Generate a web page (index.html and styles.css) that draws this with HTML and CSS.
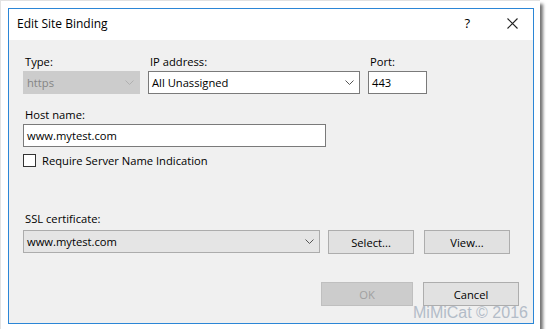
FILE: index.html
```html
<!DOCTYPE html>
<html lang="en">
<head>
    <meta charset="UTF-8">
    <meta name="viewport" content="width=device-width, initial-scale=1.0">
    <title>Edit Site Binding</title>
    <link rel="stylesheet" href="styles.css">
</head>
<body>
    <div class="paper">
        <div class="window">
            <div class="titlebar">
                <span class="title">Edit Site Binding</span>
                <span class="help">?</span>
                <span class="close">
                    <svg width="11" height="11" viewBox="0 0 11 11"><path d="M0.5 0.5 L10.5 10.5 M10.5 0.5 L0.5 10.5" stroke="#222" stroke-width="1.1" fill="none"/></svg>
                </span>
            </div>

            <div class="content">
                <!-- Type / IP / Port -->
                <div class="row top-row">
                    <div class="field type-field">
                        <div class="label">Type:</div>
                        <div class="combo disabled">
                            <span>https</span>
                            <svg class="chevron" width="9" height="5" viewBox="0 0 9 5"><path d="M0.5 0.5 L4.5 4.5 L8.5 0.5" stroke="#b0b0b0" fill="none"/></svg>
                        </div>
                    </div>
                    <div class="field ip-field">
                        <div class="label">IP address:</div>
                        <div class="combo">
                            <span>All Unassigned</span>
                            <svg class="chevron" width="9" height="5" viewBox="0 0 9 5"><path d="M0.5 0.5 L4.5 4.5 L8.5 0.5" stroke="#555" fill="none"/></svg>
                        </div>
                    </div>
                    <div class="field port-field">
                        <div class="label">Port:</div>
                        <div class="textbox">443</div>
                    </div>
                </div>

                <div class="field host-field">
                    <div class="label">Host name:</div>
                    <div class="textbox">www.mytest.com</div>
                </div>

                <div class="check">
                    <span class="box"></span>
                    <span>Require Server Name Indication</span>
                </div>

                <div class="field ssl-field">
                    <div class="label">SSL certificate:</div>
                    <div class="row ssl-row">
                        <div class="combo ssl-combo">
                            <span>www.mytest.com</span>
                            <svg class="chevron" width="9" height="5" viewBox="0 0 9 5"><path d="M0.5 0.5 L4.5 4.5 L8.5 0.5" stroke="#555" fill="none"/></svg>
                        </div>
                        <div class="btn select-btn">Select...</div>
                        <div class="btn view-btn">View...</div>
                    </div>
                </div>

                <div class="actions">
                    <div class="btn ok-btn disabled">OK</div>
                    <div class="btn cancel-btn">Cancel</div>
                </div>
            </div>
        </div>
        <div class="watermark">MiMiCat © 2016</div>
    </div>
</body>
</html>
```

FILE: styles.css
```css
body {
    margin: 0;
    background-color: #ffffff;
    font-family: "Open Sans", "Noto Sans", sans-serif;
    font-size: 11.2px;
    color: #000;
}

/* white photo frame with drop shadow */
.paper {
    position: relative;
    width: 540px;
    height: 329px;
    box-sizing: border-box;
    padding: 7px 0 0 7px;
    background-color: #ffffff;
    border-top: 1px solid #e2e2e2;
    border-left: 1px solid #e2e2e2;
    box-shadow: 3px 4px 3px rgba(0, 0, 0, 0.55);
}

.window {
    width: 526px;
    height: 316px;
    box-sizing: border-box;
    border: 1px solid #2b86d6;
    display: flex;
    flex-direction: column;
}

.titlebar {
    height: 31px;
    background-color: #ffffff;
    display: flex;
    align-items: center;
    padding: 0 0 3px 8px;
    box-sizing: border-box;
}

.title {
    flex: 1;
    font-size: 12px;
}

.help {
    font-size: 13px;
    margin-right: 37px;
}

.close {
    display: flex;
    margin-right: 15px;
}

.content {
    flex: 1;
    background-color: #f0f0f0;
    padding: 14px 14px 0 14px;
}

.row {
    display: flex;
}

.field {
    display: flex;
    flex-direction: column;
}

.label {
    height: 16px;
    line-height: 16px;
    margin: 0 0 1px 2px;
}

.combo,
.textbox {
    height: 23px;
    box-sizing: border-box;
    border: 1px solid #7a7a7a;
    background-color: #ffffff;
    display: flex;
    align-items: center;
    padding-left: 3px;
}

.combo span {
    flex: 1;
}

.chevron {
    margin-right: 5px;
}

.combo.disabled {
    background-color: #cccccc;
    border-color: #cccccc;
    color: #858585;
}

.type-field { width: 117px; margin-right: 8px; }
.ip-field { width: 212px; margin-right: 8px; }
.port-field { width: 59px; }

.host-field {
    margin-top: 13px;
    width: 303px;
}

.check {
    display: flex;
    align-items: center;
    height: 16px;
    margin-top: 5px;
}

.check .box {
    width: 13px;
    height: 13px;
    box-sizing: border-box;
    border: 1px solid #333;
    background-color: #ffffff;
    margin-right: 6px;
}

.ssl-field {
    margin-top: 43px;
}

.ssl-row {
    align-items: center;
}

.ssl-combo {
    width: 297px;
    background-color: #e5e5e5;
    border-color: #acacac;
    margin-right: 8px;
}

.btn {
    height: 24px;
    box-sizing: border-box;
    border: 1px solid #adadad;
    background-color: #e1e1e1;
    display: flex;
    align-items: center;
    justify-content: center;
}

.select-btn { width: 86px; margin-right: 10px; margin-top: 2px; }
.view-btn { width: 86px; margin-top: 2px; }

.actions {
    display: flex;
    justify-content: flex-end;
    gap: 10px;
    margin-top: 28px;
}

.ok-btn { width: 92px; }
.cancel-btn { width: 96px; }

.btn.disabled {
    background-color: #cccccc;
    border-color: #bfbfbf;
    color: #a0a0a0;
}

.watermark {
    position: absolute;
    left: 412px;
    top: 303px;
    font-family: "Liberation Sans", Arial, sans-serif;
    font-size: 16px;
    color: #b3bcc8;
}
```
